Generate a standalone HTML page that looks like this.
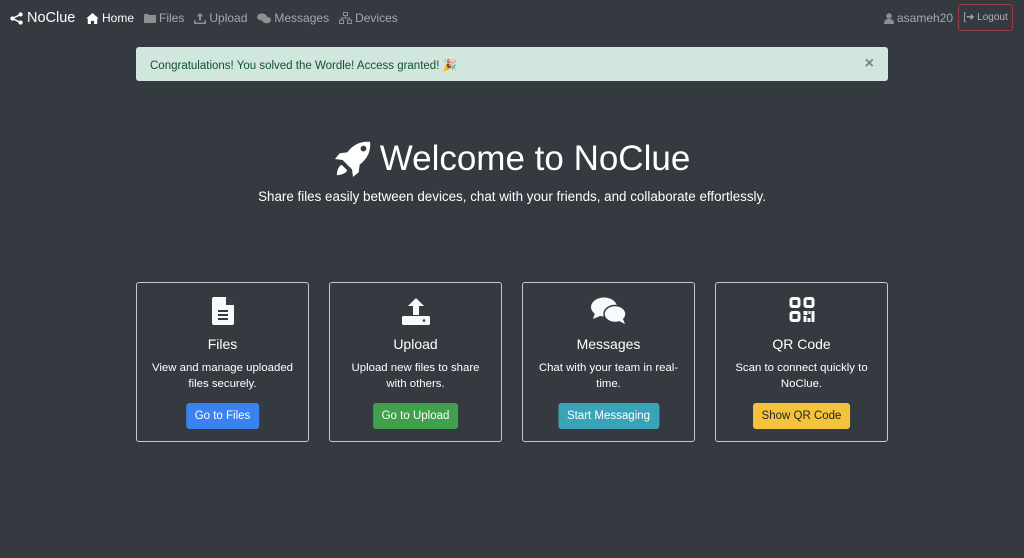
<!DOCTYPE html>
<html><head><meta charset="utf-8"><style>
*{box-sizing:border-box;margin:0;padding:0}
body{width:1024px;height:558px;background:#343a40;font-family:"Liberation Sans",sans-serif;color:#fff;position:relative;overflow:hidden}
.nav{position:absolute;top:0;left:0;right:0;height:36px}
.brand{position:absolute;left:10px;top:10px;font-size:14.5px;color:#fff;display:flex;align-items:center;gap:4px}
.links{position:absolute;left:86px;top:11px;display:flex;gap:10px;font-size:12px;color:rgba(255,255,255,.55)}
.links span{display:flex;align-items:center;gap:3px}
.links .act{color:#fff}
.user{position:absolute;left:884px;top:11px;font-size:12px;color:rgba(255,255,255,.55);display:flex;gap:3px;align-items:center}
.logout{position:absolute;left:958px;top:4px;width:55px;height:27px;border:1px solid #9b3a44;border-radius:3px;font-size:10px;color:rgba(255,255,255,.6);display:flex;align-items:center;justify-content:center;gap:2px}
.alert{position:absolute;left:136px;top:47px;width:752px;height:34px;background:#d1e7dd;border-radius:3px;color:#0f5132;font-size:11.5px;padding:11px 14px}
.alert .x{position:absolute;right:14px;top:8px;font-size:16px;color:#6c8a7c;font-weight:bold}
h1{position:absolute;top:139px;left:0;right:0;text-align:center;font-weight:300;font-size:35px;display:flex;justify-content:center;align-items:center;gap:8px}
.lead{position:absolute;top:189px;left:0;right:0;text-align:center;font-size:13.4px}
.card{position:absolute;top:282px;width:173px;height:160px;border:1px solid #c8c9ca;border-radius:3px;text-align:center}
.card svg{position:absolute;top:14px;left:50%;transform:translateX(-50%)}
.card h5{position:absolute;top:53px;left:0;right:0;font-size:14px;font-weight:400}
.card p{position:absolute;top:77px;left:10px;right:10px;font-size:11.4px;line-height:16px}
.btn{position:absolute;top:120px;left:50%;transform:translateX(-50%);height:26px;border-radius:3px;font-size:11.5px;line-height:26px;padding:0 9px;white-space:nowrap}
</style></head><body>
<div class="nav">
<div class="brand"><svg width="13" height="13" viewBox="0 0 16 16"><circle cx="3" cy="8" r="2.6" fill="#fff"/><circle cx="13" cy="3" r="2.6" fill="#fff"/><circle cx="13" cy="13" r="2.6" fill="#fff"/><path d="M3 8L13 3M3 8L13 13" stroke="#fff" stroke-width="1.8"/></svg>NoClue</div>
<div class="links">
<span class="act"><svg width="13" height="11" viewBox="0 0 16 14"><path d="M8 0L0 7h2v7h4v-4h4v4h4V7h2z" fill="#fff"/></svg>Home</span>
<span><svg width="12" height="10" viewBox="0 0 12 10"><path d="M0 1h4l1 1h7v8H0z" fill="#8c8f92"/></svg>Files</span>
<span><svg width="12" height="11" viewBox="0 0 12 11"><path d="M6 0L2.5 3.5h2.5v4h2v-4h2.5zM0 7h1.5v2.5h9V7H12v4H0z" fill="#8c8f92"/></svg>Upload</span>
<span><svg width="14" height="11" viewBox="0 0 14 11"><ellipse cx="5" cy="4" rx="5" ry="3.6" fill="#8c8f92"/><ellipse cx="9.5" cy="7" rx="4.5" ry="3.3" fill="#8c8f92"/></svg>Messages</span>
<span><svg width="13" height="12" viewBox="0 0 13 12"><path d="M4.5 .5h4v3h-4zM.5 8h4v3.5h-4zM8.5 8h4v3.5h-4zM6.5 3.5v2.5M2.5 8V6h8v2" stroke="#8c8f92" fill="none"/></svg>Devices</span>
</div>
<div class="user"><svg width="10" height="11" viewBox="0 0 10 11"><circle cx="5" cy="3" r="2.8" fill="#8c8f92"/><path d="M0 11c0-4 2-5 5-5s5 1 5 5z" fill="#8c8f92"/></svg>asameh20</div>
<div class="logout">[➜ Logout</div>
</div>
<div class="alert">Congratulations! You solved the Wordle! Access granted! 🎉<span class="x">×</span></div>
<h1><svg width="38" height="38" viewBox="0 0 40 40"><path d="M38 2C28 1 20 5 14 13L6 14 1 20l8 1 10 10 1 8 6-5 1-8c8-6 12-14 11-24zM28 9a3 3 0 1 1 0 .1z" fill="#fff"/><path d="M8 26c-4 2-5 8-5 11 3 0 9-1 11-5z" fill="#fff"/></svg>Welcome to NoClue</h1>
<div class="lead">Share files easily between devices, chat with your friends, and collaborate effortlessly.</div>

<div class="card" style="left:136px"><svg width="22" height="28" viewBox="0 0 22 28"><path d="M2 0h12l8 8v18a2 2 0 0 1-2 2H2a2 2 0 0 1-2-2V2a2 2 0 0 1 2-2z" fill="#f8f9fa"/><path d="M14 0v8h8" fill="#343a40"/><path d="M6 14h10M6 18h10M6 22h10" stroke="#343a40" stroke-width="2"/></svg><h5>Files</h5><p>View and manage uploaded files securely.</p><div class="btn" style="background:#3a82f0">Go to Files</div></div>
<div class="card" style="left:329px"><svg width="28" height="28" viewBox="0 0 28 28"><path d="M14 1L6 9h5v9h6V9h5z" fill="#f8f9fa"/><rect x="0" y="19" width="28" height="9" rx="1.5" fill="#f8f9fa"/><circle cx="22" cy="23.5" r="1.3" fill="#343a40"/></svg><h5>Upload</h5><p>Upload new files to share with others.</p><div class="btn" style="background:#40a04b">Go to Upload</div></div>
<div class="card" style="left:522px"><svg width="36" height="28" viewBox="0 0 36 28"><ellipse cx="13" cy="10" rx="13" ry="9.5" fill="#f8f9fa"/><path d="M4 16l-2 6 7-3z" fill="#f8f9fa"/><ellipse cx="24" cy="17" rx="11" ry="8.5" stroke="#343a40" stroke-width="1.5" fill="#f8f9fa"/><path d="M32 22l2 5-6-3z" fill="#f8f9fa"/></svg><h5>Messages</h5><p>Chat with your team in real-time.</p><div class="btn" style="background:#3aa3b8">Start Messaging</div></div>
<div class="card" style="left:715px"><svg width="25" height="25" viewBox="0 0 25 25"><g fill="none" stroke="#f8f9fa" stroke-width="3"><rect x="1.5" y="1.5" width="8" height="8" rx="1.5"/><rect x="15.5" y="1.5" width="8" height="8" rx="1.5"/><rect x="1.5" y="15.5" width="8" height="8" rx="1.5"/></g><path d="M14 14h4v4h-4zM19 14h2v3h-2zM22 14h3v11h-3zM14 19h3v6h-3zM18 21h3v4h-3z" fill="#f8f9fa"/></svg><h5>QR Code</h5><p>Scan to connect quickly to NoClue.</p><div class="btn" style="background:#f5c33b;color:#212529">Show QR Code</div></div>
</body></html>
